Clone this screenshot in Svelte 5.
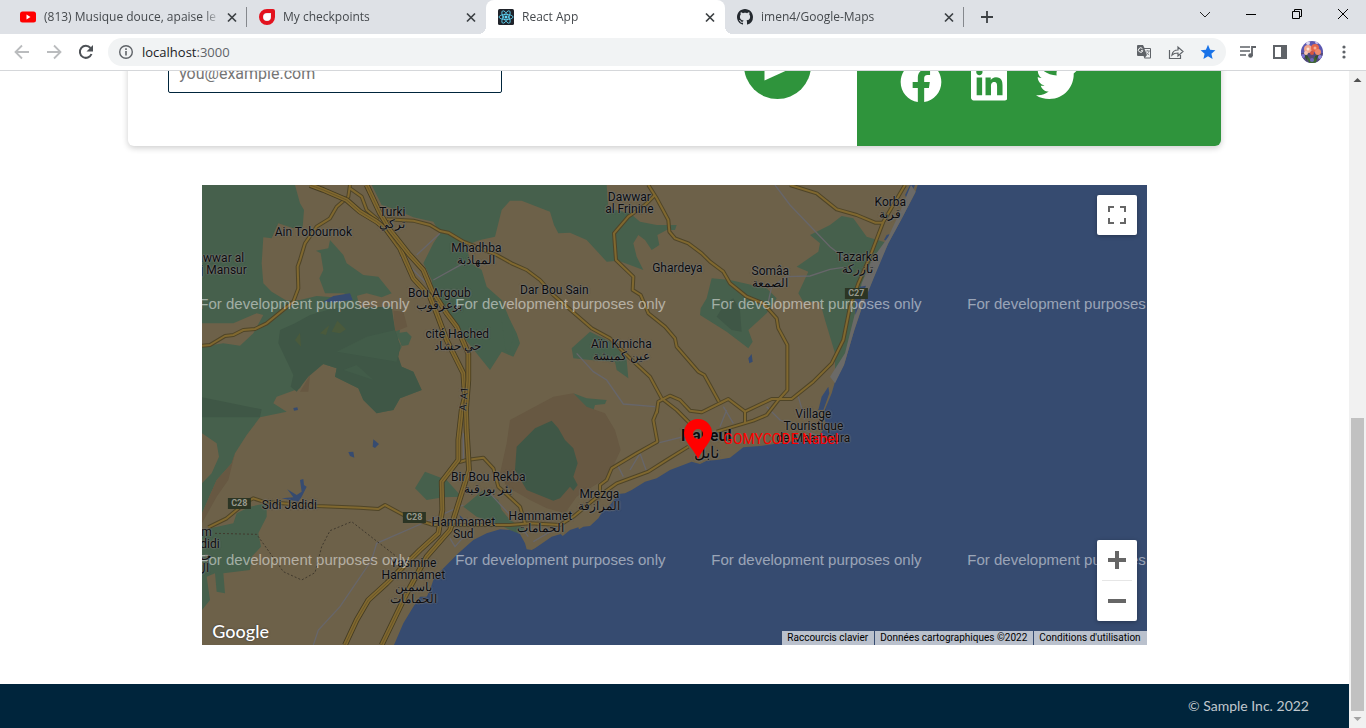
<script>
  const tabs = [
    { title: '(813) Musique douce, apaise le système', icon: 'youtube' },
    { title: 'My checkpoints', icon: 'gomycode' },
    { title: 'React App', icon: 'react', active: true },
    { title: 'imen4/Google-Maps', icon: 'github' }
  ];

  // Place names: centre x and top y in map pixels.
  const places = [
    { x: 190, y: 21, lines: ['Turki', 'تركي'] },
    { x: 111, y: 41, lines: ['Ain Tobournok'] },
    { x: 18, y: 67, lines: ['awwar al', 'aj Mansur'] },
    { x: 274, y: 57, lines: ['Mhadhba', 'المهاذبة'] },
    { x: 237, y: 102, lines: ['Bou Argoub', 'بوعرقوب'] },
    { x: 255, y: 143, lines: ['cité Hached', 'حي حشاد'] },
    { x: 427, y: 6, lines: ['Dawwar', 'al Frinine'] },
    { x: 475, y: 77, lines: ['Ghardeya'] },
    { x: 352, y: 99, lines: ['Dar Bou Sain'] },
    { x: 568, y: 80, lines: ['Somâa', 'الصمعة'] },
    { x: 419, y: 153, lines: ['Aïn Kmicha', 'عين كميشة'] },
    { x: 688, y: 11, lines: ['Korba', 'قربة'] },
    { x: 655, y: 66, lines: ['Tazarka', 'تازركة'] },
    { x: 611, y: 223, lines: ['Village', 'Touristique', 'de Maamoura'] },
    { x: 286, y: 286, lines: ['Bir Bou Rekba', 'بئر بورقبة'] },
    { x: 397, y: 303, lines: ['Mrezga', 'المرازقة'] },
    { x: 338, y: 325, lines: ['Hammamet', 'الحمامات'] },
    { x: 261, y: 331, lines: ['Hammamet', 'Sud'] },
    { x: 87, y: 314, lines: ['Sidi Jadidi'] },
    { x: 211, y: 372, lines: ['Yasmine', 'Hammamet', 'ياسمين', 'الحمامات'] },
    { x: 1, y: 341, lines: ['am', 'Jadidi', 'جم', 'ال'] },
    { x: 504, y: 242, lines: ['Nabeul', 'نابل'], city: true }
  ];

  const shields = [
    { x: 654, y: 108, name: 'C27' },
    { x: 37, y: 318, name: 'C28' },
    { x: 212, y: 332, name: 'C28' }
  ];

  const marks = [119, 375].flatMap((y) => [-3, 253, 509, 765].map((x) => ({ x, y })));

  const greens = [
    'M6 15H285L300 70 312 90 308 140 280 145 235 130 215 175 190 172 185 250 190 310 215 335 260 362 300 360 350 348 400 352 470 345 480 385 570 380 585 450 600 450 595 480 605 500 590 530 605 560 640 575 665 630 600 655 580 690 530 700 490 660 475 625 405 590 410 565 370 552 330 570 300 625 230 650 220 670 260 695 180 712 140 765 105 820 95 850 50 900 6 1000Z',
    'M590 460L620 455 635 470 625 495 605 498Z',
    'M6 1050L100 1030 110 1000 150 980 200 970V1010L175 1060 183 1100 155 1130 150 1170 70 1180 75 1240 50 1235 45 1180 20 1190 30 1260 6 1290Z',
    'M515 15L545 75 590 90 640 112 700 125 720 160 700 190 670 250 695 300 700 340 760 420 790 470 870 570 905 515 940 530 960 490 950 460 930 420 905 360 860 320 845 270 810 245 800 195 840 180 885 170 905 90 930 62 965 62 1050 95 1062 135 1075 160 1110 158 1160 180 1220 245 1255 242 1290 255 1330 270 1310 230 1300 190 1315 165 1335 180 1355 210 1378 195 1372 165 1400 150 1425 150 1430 135 1370 135 1320 125 1290 100 1225 85 1220 15Z',
    'M390 180L430 225 440 250 490 285 535 290 575 340 545 352 500 340 460 350 430 340 375 340 358 295 370 270 362 220 348 212 385 205Z',
    'M1535 295L1590 300 1700 325 1730 355 1700 400 1645 450 1658 485 1645 505 1580 455 1500 405 1502 385 1520 355Z',
    'M1830 165L1890 135 1925 108 1960 115 2000 170 2065 190 1960 440 1930 545 1905 570 1905 520 1875 420 1860 365 1810 365 1795 340 1825 275 1790 260 1855 215 1860 190Z',
    'M930 420L940 475 925 525 915 500 905 420Z',
    'M1115 505L1170 455 1240 490 1280 540 1285 595 1250 570 1245 545 1170 540 1120 535Z',
    'M1120 640L1160 655 1220 660 1215 672 1185 675 1180 692 1150 680Z',
    'M675 875L740 900 785 950 730 952 680 960 645 925Z',
    'M790 980L850 930 895 960 905 990 930 1020 980 1050 950 1060 900 1035 830 1010Z'
  ];

  const darkGreens = [
    'M285 430L330 405 400 385 575 380 585 450 600 500 595 530 605 560 640 575 665 630 600 655 580 690 550 695 530 700 490 660 475 625 405 590 410 565 370 552 325 590 290 635 272 620 280 585 235 490 240 450Z',
    'M6 652L185 688 180 712 6 712Z',
    'M1005 745L1055 722 1075 745 1095 780 1120 805 1133 850 1120 890 1133 915 1120 932 1110 920 1080 955 1060 962 980 930 945 870 950 800Z',
    'M1575 370L1600 355 1620 390 1625 455 1595 450 1550 410Z'
  ];

  const roads = [
    'M450 15L445 50 410 80 390 115 350 140 315 190 300 240 293 260 295 325 280 365 200 430 165 447 130 450 100 465 75 468 30 495 6 497',
    'M450 25L485 50 500 90 535 120',
    'M560 118L640 122 690 135 720 153 745 158 790 185 890 225 935 250 980 270 1020 300 1060 345 1175 445 1230 475 1290 535 1350 590 1385 655 1430 690 1475 735',
    'M1345 15L1370 55 1405 120 1408 155 1425 175 1465 190 1505 220 1530 245 1570 275 1590 310 1640 350 1690 370 1730 415 1735 445 1762 495V630L1735 660 1700 705 1660 722 1550 755',
    'M1365 45L1335 75 1285 110 1242 160 1248 240 1300 290 1298 330 1322 345 1345 400 1395 440 1425 475 1430 500 1495 575 1513 585 1557 665',
    'M1372 690L1360 720 1372 785 1310 820 1235 865 1220 900 1200 915 1200 935',
    'M1370 700L1375 665 1410 647 1440 660 1470 692 1505 697 1585 657 1635 695V730M1635 695L1715 657H1775L1840 605 1895 550 1930 480 1950 380 1975 310 2010 230 2050 125 2115 15',
    'M1770 15L1850 40 1910 88 1970 105 2025 128H2050',
    'M1465 800L1400 840 1345 875 1250 910 1180 960 1120 1010 1080 1035 990 1030 930 1035H700L620 1010 555 975 535 987 480 983 350 978 190 965 160 955 140 965 80 1015 25 1042',
    'M775 847L800 840 850 833 880 865 895 920 960 980 975 1030'
  ];

  const highways = [
    'M330 15L370 30 440 60 480 95 530 125 560 150 600 205 640 295 690 350 710 400 740 480 790 580 795 650 785 690 775 780V840L725 905 727 990 715 1060 660 1110 560 1210 505 1260 470 1320 435 1395',
    'M500 15L540 100 570 150 625 220 670 270 695 330 740 400 770 440 805 520V600L798 690 800 750 807 870 750 1050 680 1130 620 1240 545 1395'
  ];

  const streets = [
    'M720 160L650 225M790 250L700 300M600 230L690 320',
    'M1725 15L1770 75 1890 200 1935 235',
    'M1705 365L1715 320 1760 290 1830 288 1890 268 1930 262',
    'M1130 520L1180 575 1220 600 1270 672 1365 680',
    'M790 975L690 1020 530 1090 515 1140 420 1280 355 1350 340 1395',
    'M1370 790L1470 765M1290 870L1320 820 1340 875M1250 850L1270 890M1580 690L1560 740M1570 680L1600 730M1700 680L1740 720 1860 770M1795 650L1815 720',
    'M985 1070L970 1050M1000 1085L1110 1020M870 940L930 1005M750 1075L765 1100 800 1060',
    'M790 760V850'
  ];
</script>

{#snippet cross()}
  <svg viewBox="0 0 16 16" width="16" height="16" aria-hidden="true"><path d="M4 4.500l8 8M12 4.500l-8 8" stroke="#3c4043" stroke-width="1.700" /></svg>
{/snippet}

<div class="browser">
  <header>
    <div class="tabstrip">
      {#each tabs as tab}
        <div class="tab" class:active={tab.active}>
          <svg viewBox="0 0 16 16" width="16" height="16" aria-hidden="true">
            {#if tab.icon === 'youtube'}
              <rect x="0" y="2.500" width="16" height="11" rx="2.500" fill="#f00" /><path d="M6.500 5.500v5L10.500 8z" fill="#fff" />
            {:else if tab.icon === 'gomycode'}
              <path d="M8 2h6v6a6 6 0 1 1-6-6z" fill="none" stroke="#e3131f" stroke-width="4" stroke-linejoin="round" />
              <path d="M8 4.500h3.500V8A3.500 3.500 0 1 1 8 4.500z" fill="#fff" />
            {:else if tab.icon === 'react'}
              <rect width="16" height="16" rx="1.500" fill="#20232a" />
              <g fill="none" stroke="#61dafb" stroke-width=".8"><ellipse cx="8" cy="8" rx="7" ry="2.600" /><ellipse cx="8" cy="8" rx="7" ry="2.600" transform="rotate(60 8 8)" /><ellipse cx="8" cy="8" rx="7" ry="2.600" transform="rotate(120 8 8)" /></g>
              <circle cx="8" cy="8" r="1.500" fill="#61dafb" />
            {:else}
              <path fill="#24292f" d="M8 0C3.580 0 0 3.580 0 8c0 3.540 2.290 6.530 5.470 7.590.4.070.55-.17.55-.38 0-.19-.01-.82-.01-1.490-2.010.37-2.530-.49-2.690-.94-.09-.23-.48-.94-.82-1.130-.28-.15-.68-.52-.01-.53.63-.01 1.080.58 1.230.82.72 1.210 1.870.87 2.330.66.07-.52.28-.87.51-1.070-1.780-.2-3.640-.89-3.640-3.950 0-.87.31-1.590.82-2.150-.08-.2-.36-1.020.08-2.120 0 0 .67-.21 2.200.82.64-.18 1.320-.27 2-.27s1.360.09 2 .27c1.530-1.040 2.200-.82 2.200-.82.44 1.100.16 1.920.08 2.120.51.56.82 1.270.82 2.150 0 3.070-1.870 3.750-3.650 3.950.29.25.54.73.54 1.480 0 1.070-.01 1.930-.01 2.200 0 .21.15.46.55.38A8.010 8.010 0 0 0 16 8c0-4.420-3.580-8-8-8z" />
            {/if}
          </svg>
          <span class="title">{tab.title}</span>
          <button aria-label="Close tab">{@render cross()}</button>
        </div>
      {/each}
      <button class="newtab" aria-label="New tab"><svg viewBox="0 0 16 16" width="16" height="16"><path d="M8 2v12M2 8h12" stroke="#3c4043" stroke-width="1.800" /></svg></button>
      <div class="window">
        <button aria-label="Search tabs"><svg viewBox="0 0 12 12" width="12" height="12"><path d="M1 4l5 5 5-5" fill="none" stroke="#222" /></svg></button>
        <button aria-label="Minimize"><svg viewBox="0 0 12 12" width="12" height="12"><path d="M1 6.500h10" stroke="#000" /></svg></button>
        <button aria-label="Restore"><svg viewBox="0 0 12 12" width="12" height="12"><path d="M1.500 3.500h7v7h-7zM3.500 3.500v-2h7v7h-2" fill="none" stroke="#000" /></svg></button>
        <button aria-label="Close"><svg viewBox="0 0 12 12" width="12" height="12"><path d="M1 1l10 10M11 1L1 11" stroke="#000" /></svg></button>
      </div>
    </div>
    <div class="toolbar">
      <button aria-label="Back"><svg viewBox="0 0 16 16" width="16" height="16"><path d="M15 8H2M8 1.500L1.500 8 8 14.500" fill="none" stroke="#babcbe" stroke-width="1.800" /></svg></button>
      <button aria-label="Forward"><svg viewBox="0 0 16 16" width="16" height="16"><path d="M1 8h13M8 1.500L14.500 8 8 14.500" fill="none" stroke="#babcbe" stroke-width="1.800" /></svg></button>
      <button aria-label="Reload"><svg viewBox="0 0 16 16" width="16" height="16"><path d="M13.500 10A6 6 0 1 1 12.500 4" fill="none" stroke="#4d5156" stroke-width="2" /><path d="M15 1v6.500H8.500z" fill="#4d5156" /></svg></button>
      <div class="omnibox">
        <svg viewBox="0 0 16 16" width="16" height="16" aria-hidden="true"><circle cx="8" cy="8" r="6.300" fill="none" stroke="#5f6368" stroke-width="1.400" /><path d="M8 7v4.500M8 4.300v1.600" stroke="#5f6368" stroke-width="1.600" /></svg>
        <span class="url">localhost<i>:3000</i></span>
        <button aria-label="Translate this page"><svg viewBox="0 0 16 16" width="16" height="16"><path d="M2 1h5l1.500 3H14a1 1 0 0 1 1 1v8.500a1 1 0 0 1-1 1H8.500L7.500 12H2a1 1 0 0 1-1-1V2a1 1 0 0 1 1-1z" fill="#5f6368" /><path d="M8.500 5h5.500v8.500H9l2-2.500z" fill="#f1f3f4" /><path d="M9.500 7H14M11.700 6v1M13 7c-.5 2-1.500 3-2.700 4M10.500 8.500c.7 1.200 1.700 2 2.700 2.500" fill="none" stroke="#8d9195" /><path d="M6.500 4.800a2.200 2.200 0 1 0 .3 1.900H5" fill="none" stroke="#fff" /></svg></button>
        <button aria-label="Share"><svg viewBox="0 0 16 16" width="16" height="16"><path d="M1.500 6v8.500h11V11M4 11c.5-3.500 2.500-5 6-5V3l5 4.500-5 4.500V9C7 9 5.500 9.500 4 11z" fill="none" stroke="#5f6368" stroke-width="1.200" /></svg></button>
        <button aria-label="Bookmark this tab"><svg viewBox="0 0 16 16" width="16" height="16"><path d="M8 .8l2.100 4.900 5.300.5-4 3.500 1.200 5.200L8 12.200l-4.600 2.700 1.200-5.200-4-3.500 5.300-.5z" fill="#1a73e8" /></svg></button>
      </div>
      <button aria-label="Media controls"><svg viewBox="0 0 16 16" width="16" height="16"><path d="M0 3h10M0 7h10M0 11h6" stroke="#5f6368" stroke-width="1.600" /><circle cx="10.500" cy="11.500" r="2.300" fill="#5f6368" /><path d="M12 12V3h4" fill="none" stroke="#5f6368" stroke-width="1.800" /></svg></button>
      <button aria-label="Side panel"><svg viewBox="0 0 16 16" width="16" height="16"><path d="M1 1h14v14H1zM3 3v10h6V3z" fill="#5f6368" fill-rule="evenodd" /></svg></button>
      <button aria-label="Profile">
        <svg viewBox="0 0 22 22" width="22" height="22">
          <defs><clipPath id="face"><circle cx="11" cy="11" r="11" /></clipPath></defs>
          <g clip-path="url(#face)">
            <rect width="22" height="22" fill="#5b57b0" /><path d="M0 12h22v10H0z" fill="#534a7c" />
            <path d="M5 13l5 7 7-7-2 9H8z" fill="#3e6a2c" /><path d="M3 14l4 1-1 5zM14 15l4-1-3 5z" fill="#35502c" />
            <circle cx="7" cy="2" r="2" fill="#dcd6f0" /><circle cx="16" cy="1" r="2" fill="#c9c0e8" /><circle cx="2" cy="15" r="2" fill="#7c72d4" /><circle cx="19" cy="16" r="2" fill="#8c86dd" /><circle cx="11" cy="19" r="2" fill="#6e66b8" />
            <circle cx="7" cy="8" r="4" fill="#f0a58c" /><circle cx="14" cy="7" r="4" fill="#e4674b" /><circle cx="11" cy="12" r="2" fill="#d9543d" /><circle cx="17" cy="11" r="3" fill="#ef8a6c" /><circle cx="5" cy="12" r="2" fill="#f6c4ae" />
            <circle cx="7" cy="8" r="1.500" fill="#fbe4d3" /><circle cx="14" cy="7" r="1.500" fill="#f9b094" />
          </g>
        </svg>
      </button>
      <button aria-label="Menu"><svg viewBox="0 0 16 16" width="16" height="16" fill="#5f6368"><circle cx="8" cy="3" r="1.600" /><circle cx="8" cy="8" r="1.600" /><circle cx="8" cy="13" r="1.600" /></svg></button>
    </div>
  </header>

  <div class="viewport">
    <div class="page">
      <section class="card">
        <div class="form">
          <input type="email" aria-label="Email" placeholder="you@example.com" />
          <button class="send" aria-label="Send"><svg viewBox="0 0 67 67" width="67" height="67"><circle cx="33.500" cy="33.500" r="33.500" fill="#2f943c" /><path d="M20.500 18.500v30l33-15z" fill="#fff" /></svg></button>
        </div>
        <div class="social">
          <a href="#facebook" aria-label="Facebook"><svg viewBox="0 0 512 512" height="42"><path d="M504 256C504 119 393 8 256 8S8 119 8 256c0 123.780 90.690 226.380 209.250 245V327.690h-63V256h63v-54.640c0-62.150 37-96.480 93.670-96.480 27.140 0 55.520 4.840 55.520 4.840v61h-31.280c-30.800 0-40.410 19.120-40.410 38.730V256h68.780l-11 71.690h-57.780V501C413.310 482.380 504 379.780 504 256z" /></svg></a>
          <a href="#linkedin" aria-label="LinkedIn"><svg viewBox="0 0 448 512" height="42"><path d="M416 32H31.900C14.300 32 0 46.500 0 64.300v383.400C0 465.500 14.300 480 31.900 480H416c17.600 0 32-14.500 32-32.300V64.300c0-17.800-14.400-32.300-32-32.300zM135.400 416H69V202.200h66.500V416zm-33.200-243c-21.300 0-38.500-17.300-38.500-38.500S80.900 96 102.200 96c21.200 0 38.500 17.300 38.500 38.500 0 21.300-17.200 38.500-38.500 38.500zm282.100 243h-66.400V312c0-24.800-.5-56.700-34.500-56.700-34.600 0-39.900 27-39.900 54.900V416h-66.400V202.200h63.700v29.200h.9c8.900-16.800 30.600-34.500 62.900-34.500 67.200 0 79.700 44.300 79.700 101.900V416z" /></svg></a>
          <a href="#twitter" aria-label="Twitter"><svg viewBox="0 0 512 512" height="42"><path d="M459.370 151.716c.325 4.548.325 9.097.325 13.645 0 138.720-105.583 298.558-298.558 298.558-59.452 0-114.680-17.219-161.137-47.106 8.447.974 16.568 1.299 25.340 1.299 49.055 0 94.213-16.568 130.274-44.832-46.132-.975-84.792-31.188-98.112-72.772 6.498.974 12.995 1.624 19.818 1.624 9.421 0 18.843-1.300 27.614-3.573-48.081-9.747-84.143-51.980-84.143-102.985v-1.299c13.969 7.797 30.214 12.670 47.431 13.319-28.264-18.843-46.781-51.005-46.781-87.391 0-19.492 5.197-37.360 14.294-52.954 51.655 63.675 129.300 105.258 216.365 109.807-1.624-7.797-2.599-15.918-2.599-24.040 0-57.828 46.782-104.934 104.934-104.934 30.213 0 57.502 12.670 76.670 33.137 23.715-4.548 46.456-13.320 66.599-25.340-7.798 24.366-24.366 44.833-46.132 57.827 21.117-2.273 41.584-8.122 60.426-16.243-14.292 20.791-32.161 39.308-52.628 54.253z" /></svg></a>
        </div>
      </section>

      <section class="map" aria-label="Map">
        <svg class="tiles" viewBox="6 15 2835 1380" width="945" height="460" aria-hidden="true">
          <rect x="6" y="15" width="2835" height="1380" fill="#6d6149" />
          {#each greens as d}<path {d} fill="#46604c" />{/each}
          <path d="M6 430H100L170 400 190 405 160 460 120 497 70 490 6 500ZM6 760L50 790 57 830 35 880 6 910Z" fill="#6d6149" />
          <path d="M180 715L140 765 105 820 85 900 50 950 6 1030 6 1000 50 900 95 850 105 820 140 765ZM330 585L325 635 300 635ZM580 392L610 395 622 440 585 455Z" fill="#675842" />
          <path d="M930 720L1060 650 1120 640 1160 680 1215 700 1245 750 1262 810 1225 890 1130 950 1095 1000 1040 985 990 960 920 920 900 880 920 790Z" fill="#675842" />
          {#each darkGreens as d}<path {d} fill="#3f5746" />{/each}
          <path d="M285 480L300 458 303 500ZM360 460L388 435 378 465ZM395 455L412 422 438 448 420 460Z" fill="#4a5a3c" />
          <path d="M410 515L500 470 585 450 600 500 590 545ZM430 570L470 555 520 600Z" fill="#425c49" />
          <g fill="#364b70">
            <path d="M2153 15L2145 40 2103 120 2065 190 2040 245 2010 320 1990 370 1963 450 1932 555 1905 605 1895 640 1870 700 1878 735 1860 765 1830 775 1770 785 1680 798 1630 802 1590 833 1550 840 1520 842 1500 852 1475 845 1410 870 1370 895 1335 905 1295 930 1275 940 1255 942 1230 975 1210 990 1195 1015 1170 1038 1150 1040 1137 1048 1135 1042 1110 1050 1088 1068 1082 1062 1055 1070 1005 1105 995 1110 980 1108 975 1090 960 1062 930 1050 900 1048 860 1060 820 1080 775 1120 725 1170 700 1200 690 1230 680 1250 660 1250 640 1280 610 1330 582 1395H2841V15Z" />
            <path d="M370 365L400 348 450 340 458 360 400 367ZM280 684L292 682 294 690 282 692ZM1645 535L1655 522 1658 545 1648 550ZM445 816L460 815 463 833 450 828ZM520 778L537 792 525 804 518 800ZM262 928L290 945 305 935 300 900 310 897 312 915 320 920 305 950 295 965 245 955 280 952Z" />
            <path d="M1855 690L1865 650 1885 620 1888 640 1870 690ZM2115 45L2130 15H2145L2125 65ZM2052 180L2060 165 2070 162 2060 182ZM778 1005L795 1020 785 1025Z" />
          </g>
          <path d="M2133 15L2100 95 2065 170 2015 240 1985 310 1965 400 1935 520 1890 590 1905 610 1932 555 1963 450 1990 370 2025 285 2065 190 2103 120 2147 35Z" fill="#6b6a68" />
          <path d="M1965 350L1980 320 1998 317 1985 355 1966 405Z" fill="#364b70" />
          <g fill="none" stroke="#67666a" stroke-width="4">{#each streets as d}<path {d} />{/each}</g>
          <path d="M45 1060L170 1063 250 1175 305 1200 345 1178 365 1100 390 1052 455 1025 590 1130" fill="none" stroke="#40392d" stroke-width="3" stroke-dasharray="6 6" />
          <g fill="none" stroke-linejoin="round">
            {#each roads as d}<path {d} stroke="#4f4528" stroke-width="12" />{/each}
            {#each roads as d}<path {d} stroke="#80682f" stroke-width="6" />{/each}
            {#each highways as d}<path {d} stroke="#453c22" stroke-width="17" /><path {d} stroke="#80682f" stroke-width="12" /><path {d} stroke="#5d4d25" stroke-width="2" />{/each}
          </g>
        </svg>
        {#each places as p}
          <span class="place" class:city={p.city} style:left="{p.x}px" style:top="{p.y}px">
            {#each p.lines as line}<b>{line}</b>{/each}
          </span>
        {/each}
        <span class="place motorway">A. A1</span>
        {#each shields as s}<span class="shield" style:left="{s.x}px" style:top="{s.y}px">{s.name}</span>{/each}
        {#each marks as m}<span class="mark" style:left="{m.x}px" style:top="{m.y}px">For development purposes only</span>{/each}
        <div class="pin">
          <svg viewBox="0 0 28 40" width="28" height="40" aria-hidden="true"><path d="M14 0a14 14 0 0 1 14 14c0 9-9 15-14 26C9 29 0 23 0 14A14 14 0 0 1 14 0zm0 10a5 5 0 1 0 0 10 5 5 0 0 0 0-10z" fill="red" fill-rule="evenodd" /></svg>
          <span>GOMYCODE Nabel</span>
        </div>
        <span class="google">Google</span>
        <button class="control full" aria-label="Toggle fullscreen view"><svg viewBox="0 0 18 18" width="18" height="18"><path d="M1 6V1h5M12 1h5v5M17 12v5h-5M6 17H1v-5" fill="none" stroke="#666" stroke-width="2" /></svg></button>
        <div class="control zoom">
          <button aria-label="Zoom in"><svg viewBox="0 0 18 18" width="18" height="18"><path d="M9 0v18M0 9h18" stroke="#666" stroke-width="4" /></svg></button>
          <button aria-label="Zoom out"><svg viewBox="0 0 18 18" width="18" height="18"><path d="M0 9h18" stroke="#666" stroke-width="4" /></svg></button>
        </div>
        <div class="terms">
          <button>Raccourcis clavier</button><span>Données cartographiques ©2022</span><a href="#terms">Conditions d'utilisation</a>
        </div>
      </section>

      <footer>© Sample Inc. 2022</footer>
    </div>
    <div class="scrollbar" aria-hidden="true">
      <svg viewBox="0 0 17 17" width="17" height="17"><path d="M4.500 11h8l-4-4z" fill="#505050" /></svg>
      <div class="track"><div class="thumb"></div></div>
      <svg viewBox="0 0 17 17" width="17" height="17"><path d="M4.500 6h8l-4 4z" fill="#a3a3a3" /></svg>
    </div>
  </div>
</div>

<style>
  :global(body) { background: #fff; }
  .browser { display: flex; flex-direction: column; height: 100vh; overflow: hidden; font-family: "Open Sans", "Noto Sans", sans-serif; }
  .browser * { box-sizing: border-box; }
  svg { display: block; flex: none; }
  button { padding: 0; border: 0; background: none; color: inherit; font: inherit; display: flex; align-items: center; justify-content: center; }
  header { flex: none; background: #fff; border-bottom: 1px solid #d5d7da; }
  .tabstrip { display: flex; height: 34px; padding-left: 8px; background: #dee1e6; }
  .tab { position: relative; flex: 0 1 239px; min-width: 0; display: flex; align-items: center; gap: 8px; padding: 0 7px 1px 12px; color: #45494d; font-size: 12px; }
  .tab:not(.active)::after { content: ""; position: absolute; right: 0; top: 7px; height: 20px; border-right: 1px solid #85888d; }
  .tab:has(+ .active)::after { display: none; }
  .title { flex: 1; margin-right: -4px; overflow: hidden; white-space: nowrap; -webkit-mask-image: linear-gradient(90deg, #000 calc(100% - 16px), transparent); mask-image: linear-gradient(90deg, #000 calc(100% - 16px), transparent); }
  .active { background: #fff; border-radius: 8px 8px 0 0; }
  .active::before, .active::after { content: ""; position: absolute; bottom: 0; width: 8px; height: 8px; }
  .active::before { left: -8px; background: radial-gradient(circle at 0 0, #dee1e6 8px, #fff 8px); }
  .active::after { right: -8px; background: radial-gradient(circle at 100% 0, #dee1e6 8px, #fff 8px); }
  .newtab { width: 46px; }
  .window { display: flex; margin-left: auto; height: 28px; }
  .window button { width: 46px; }
  .toolbar { display: flex; align-items: center; height: 36px; padding: 0 6px; }
  .toolbar button { width: 32px; height: 28px; flex: none; }
  .omnibox { flex: 1; display: flex; align-items: center; height: 28px; margin: 0 6px; padding: 0 2px 0 10px; border-radius: 14px; background: #f1f3f4; }
  .url { flex: 1; margin-left: 8px; font-size: 13px; color: #202124; }
  .url i { font-style: normal; color: #5f6368; }
  .viewport { flex: 1; min-height: 0; display: flex; }
  .page { flex: 1; min-width: 0; display: flex; flex-direction: column; justify-content: flex-end; overflow: hidden; }
  .scrollbar { width: 17px; display: flex; flex-direction: column; background: #f1f1f1; }
  .track { flex: 1; display: flex; flex-direction: column; justify-content: flex-end; padding: 0 2px; }
  .thumb { height: 47%; background: #c1c1c1; }
  .card { flex: none; display: flex; width: 81%; height: 120px; margin: 0 auto; border-radius: 6px; overflow: hidden; box-shadow: 0 2px 6px rgba(0, 0, 0, .2); }
  .form { flex: 1; display: flex; justify-content: space-between; align-items: flex-start; padding: 6px 46px 0 40px; }
  input { width: 334px; height: 40px; margin-top: 21px; padding: 0 10px; border: 1px solid #00253c; border-radius: 2px; background: #fff; font: 16px Roboto, sans-serif; }
  input::placeholder { color: #757575; opacity: 1; }
  .social { width: 33.333%; display: flex; align-items: flex-start; gap: 29px; padding: 35px 43px 0; background: #2f943c; }
  .social svg { fill: #fff; }
  .map { position: relative; flex: none; width: 70%; height: 460px; margin: 39px auto; overflow: hidden; background: #364b70; font-family: Roboto, "Noto Sans", sans-serif; }
  .tiles { width: 945px; height: 460px; }
  .place { position: absolute; transform: translateX(-50%); color: #0c0c0c; font-size: 12px; line-height: 12px; text-align: center; white-space: nowrap; text-shadow: 0 0 2px #777, 0 0 1px #777, 0 0 2px #777; }
  .place b { display: block; font-weight: 400; }
  .city { font-size: 16px; line-height: 17px; }
  .city b:first-child { font-weight: 700; }
  .motorway { left: 262px; top: 208px; transform: translateX(-50%) rotate(-85deg); font-size: 10px; }
  .shield { position: absolute; transform: translateX(-50%); margin-top: -5px; padding: 0 3px; background: #2c3524; color: #96988c; font-size: 9px; font-weight: 700; line-height: 11px; }
  .mark { position: absolute; transform: translateY(-50%); color: rgba(255, 255, 255, .5); font: 15px/18px "Liberation Sans", Arial, sans-serif; white-space: nowrap; }
  .pin { position: absolute; left: 482px; top: 234px; display: flex; align-items: center; gap: 11px; color: red; font-size: 14px; white-space: nowrap; }
  .google { position: absolute; left: 10px; bottom: 3px; color: #fff; font: 500 18px/22px Lato, sans-serif; text-shadow: 0 0 2px #333; }
  .control { position: absolute; right: 10px; width: 40px; border-radius: 2px; background: #fff; box-shadow: 0 1px 4px rgba(0, 0, 0, .3); }
  .full { top: 10px; height: 40px; }
  .zoom { bottom: 24px; padding: 0 5px; }
  .zoom button { width: 30px; height: 40px; }
  .zoom button + button { height: 41px; border-top: 1px solid #e6e6e6; }
  .terms { position: absolute; right: 0; bottom: 0; display: flex; color: #000; font-size: 10px; line-height: 14px; }
  .terms > * { padding: 0 6px 0 5px; background: #bac1cd; color: #000; text-decoration: none; }
  .terms > * + * { border-left: 1px solid #364b70; }
  footer { flex: none; height: 44px; padding: 0 40px; background: #00253c; color: #c0c8ce; font: 14px/43px Lato, sans-serif; text-align: right; }
</style>
